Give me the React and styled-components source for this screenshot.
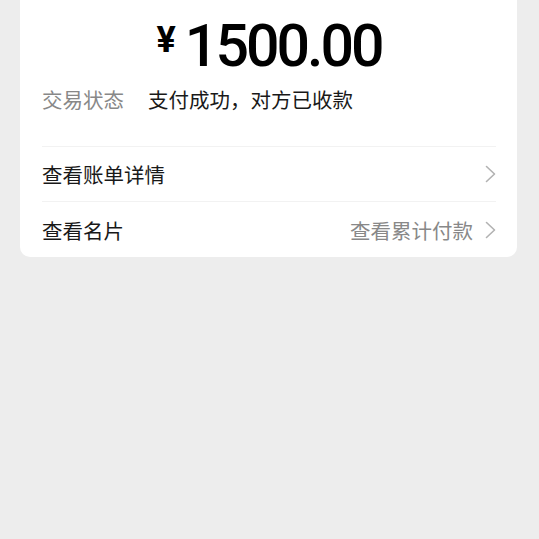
import React from 'react';
import styled, { createGlobalStyle } from 'styled-components';

const textColor = '#191919';
const mutedColor = '#888888';

const GlobalStyle = createGlobalStyle`
  html, body {
    margin: 0;
    padding: 0;
    background: #ededed;
  }
  body {
    font-family: "Noto Sans CJK SC", "Noto Sans", sans-serif;
    -webkit-font-smoothing: antialiased;
  }
`;

const Page = styled.div`
  min-height: 539px;
  padding: 0 22px 0 20px;
`;

const Card = styled.div`
  background: #fff;
  border-radius: 0 0 10px 10px;
  padding: 0 21px 0 22px;
`;

const Amount = styled.div`
  display: flex;
  justify-content: center;
  align-items: flex-start;
  gap: 9px;
  padding-top: 16px;
  height: 57px;
  color: #000;
  font-family: Roboto, "Liberation Sans", sans-serif;
`;

const Currency = styled.span`
  margin-top: 6px;
  font-size: 36px;
  font-weight: 700;
  line-height: 1;
`;

const Value = styled.span`
  font-size: 59px;
  font-weight: 500;
  line-height: 1;
  letter-spacing: -3px;
`;

const StatusRow = styled.div`
  display: flex;
  align-items: center;
  gap: 24px;
  height: 28px;
  padding: 12px 0 33px;
  font-size: 20.5px;
`;

const Label = styled.span`
  color: ${mutedColor};
`;

const StatusText = styled.span`
  color: ${textColor};
`;

const LinkRow = styled.div`
  display: flex;
  align-items: center;
  justify-content: space-between;
  height: ${({ $height }) => $height}px;
  border-top: 1px solid #f2f2f2;
  font-size: 20.5px;
  color: ${textColor};
`;

const Extra = styled.div`
  display: flex;
  align-items: center;
  gap: 12px;
  color: ${mutedColor};
`;

const Chevron = () => (
  <svg width="11" height="18" viewBox="0 0 11 18" fill="none">
    <path d="M1.5 1.5 L9.5 9 L1.5 16.5" stroke="#b2b2b2" strokeWidth="1.6" strokeLinecap="round" strokeLinejoin="round" />
  </svg>
);

const rows = [
  { title: '查看账单详情', height: 54 },
  { title: '查看名片', extra: '查看累计付款', height: 55 },
];

export default function App() {
  return (
    <Page>
      <GlobalStyle />
      <Card>
        <Amount>
          <Currency>¥</Currency>
          <Value>1500.00</Value>
        </Amount>
        <StatusRow>
          <Label>交易状态</Label>
          <StatusText>支付成功，对方已收款</StatusText>
        </StatusRow>
        {rows.map(row => (
          <LinkRow key={row.title} $height={row.height}>
            <span>{row.title}</span>
            <Extra>
              {row.extra && <span>{row.extra}</span>}
              <Chevron />
            </Extra>
          </LinkRow>
        ))}
      </Card>
    </Page>
  );
}
